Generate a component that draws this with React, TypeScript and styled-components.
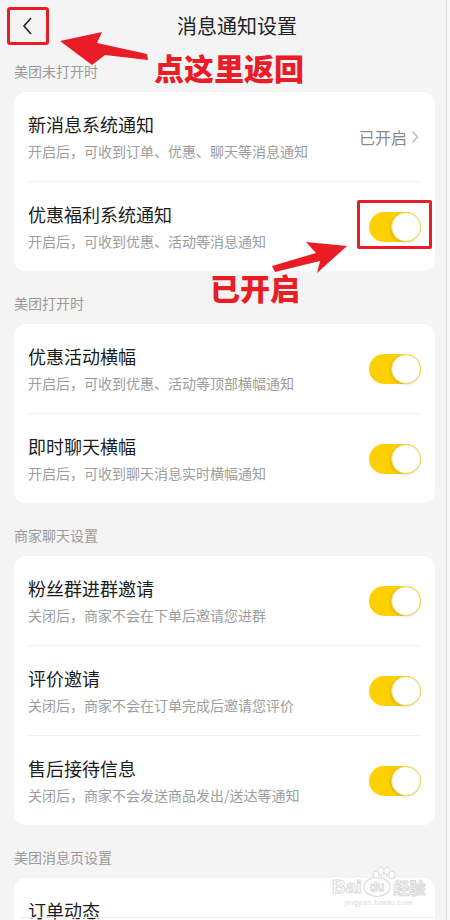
import React from "react";
import styled, { createGlobalStyle } from "styled-components";

const Global = createGlobalStyle`
  html, body { margin: 0; padding: 0; background: #f4f4f4; }
  body { font-family: "Noto Sans CJK SC", "Noto Sans", sans-serif; }
`;

const RED = "#ea1d27";

const Root = styled.div`
  position: relative;
  width: 450px;
  height: 920px;
  overflow: hidden;
  background: #f4f4f4;
  box-shadow: inset -3px 0 0 #f8f8f8, inset -4px 0 0 #e2e2e2;
`;

const Header = styled.div`
  display: flex;
  align-items: flex-start;
  height: 54px;
  box-sizing: border-box;
  padding: 7px 0 0 7px;
`;

const BackBox = styled.div`
  width: 42px;
  height: 38px;
  box-sizing: border-box;
  border: 3px solid ${RED};
  border-radius: 3px;
  display: flex;
  align-items: center;
  justify-content: center;
`;

const Title = styled.div`
  flex: 1;
  padding-right: 25px;
  text-align: center;
  font-size: 20px;
  line-height: 38px;
  color: #222;
`;

const SectionLabel = styled.div<{ $top: number }>`
  padding: ${(p) => p.$top}px 14px 11px;
  font-size: 14px;
  line-height: 20px;
  color: #9a9a9a;
`;

const Card = styled.div`
  margin: 0 15px 0 14px;
  background: #fff;
  border-radius: 12px;
  overflow: hidden;
`;

const Row = styled.div`
  display: flex;
  align-items: center;
  justify-content: space-between;
  height: 89px;
  box-sizing: border-box;
  padding: 0 14px;
`;

const TextBlock = styled.div`
  display: flex;
  flex-direction: column;
  min-height: 49px;
`;

const RowTitle = styled.div`
  font-size: 18px;
  line-height: 24px;
  color: #1c1c1c;
`;

const RowSub = styled.div`
  margin-top: 6px;
  font-size: 14px;
  line-height: 19px;
  color: #9d9d9d;
`;

const Divider = styled.div`
  height: 1px;
  margin: 0 14px;
  background: #f1f1f1;
`;

const StatusLink = styled.div`
  display: flex;
  align-items: center;
  gap: 4px;
  margin-right: 2px;
  font-size: 16px;
  color: #8a8a8a;
`;

const Toggle = styled.div<{ $on: boolean }>`
  position: relative;
  width: 52px;
  height: 30px;
  border-radius: 15px;
  background: ${(p) => (p.$on ? "#ffcf00" : "#e5e5e5")};
  flex-shrink: 0;
`;

const Knob = styled.div<{ $on: boolean }>`
  position: absolute;
  top: 0;
  ${(p) => (p.$on ? "right: 0;" : "left: 0;")}
  width: 30px;
  height: 30px;
  box-sizing: border-box;
  border-radius: 50%;
  background: #fff;
  border: 1px solid #f2d462;
  box-shadow: -1px 1px 2px rgba(0, 0, 0, 0.12);
`;

const Callout = styled.div<{ $left: number; $top: number }>`
  position: absolute;
  left: ${(p) => p.$left}px;
  top: ${(p) => p.$top}px;
  font-size: 30px;
  line-height: 34px;
  font-weight: 900;
  color: ${RED};
  white-space: nowrap;
`;

const HighlightBox = styled.div`
  position: absolute;
  left: 357px;
  top: 200px;
  width: 75px;
  height: 49px;
  box-sizing: border-box;
  border: 3px solid ${RED};
  border-radius: 2px;
`;

const Overlay = styled.svg`
  position: absolute;
  left: 0;
  top: 0;
  pointer-events: none;
`;

const Watermark = styled.div`
  position: absolute;
  left: 332px;
  top: 866px;
  display: flex;
  flex-direction: column;
  align-items: center;
  pointer-events: none;
`;

const WmTop = styled.div`
  display: flex;
  align-items: flex-end;
  font-family: "Liberation Sans", Arial, sans-serif;
  font-size: 19px;
  line-height: 22px;
  font-weight: 700;
  -webkit-text-stroke: 1px #d9d9d9;
  color: #fff;
`;

const WmSmall = styled.div`
  font-family: "Liberation Sans", Arial, sans-serif;
  font-size: 8px;
  line-height: 10px;
  color: #dcdcdc;
  letter-spacing: 0.2px;
`;

const WmCjk = styled.span`
  font-family: "Noto Sans CJK SC", sans-serif;
  font-size: 16px;
  margin-left: 2px;
`;

const BottomEdge = styled.div`
  position: absolute;
  left: 20px;
  right: 16px;
  top: 917px;
  height: 1px;
  background: #ececec;
`;

type Item = { title: string; sub?: string; kind: "toggle" | "link" | "none" };

const sections: { label: string; items: Item[] }[] = [
  {
    label: "美团未打开时",
    items: [
      { title: "新消息系统通知", sub: "开启后，可收到订单、优惠、聊天等消息通知", kind: "link" },
      { title: "优惠福利系统通知", sub: "开启后，可收到优惠、活动等消息通知", kind: "toggle" },
    ],
  },
  {
    label: "美团打开时",
    items: [
      { title: "优惠活动横幅", sub: "开启后，可收到优惠、活动等顶部横幅通知", kind: "toggle" },
      { title: "即时聊天横幅", sub: "开启后，可收到聊天消息实时横幅通知", kind: "toggle" },
    ],
  },
  {
    label: "商家聊天设置",
    items: [
      { title: "粉丝群进群邀请", sub: "关闭后，商家不会在下单后邀请您进群", kind: "toggle" },
      { title: "评价邀请", sub: "关闭后，商家不会在订单完成后邀请您评价", kind: "toggle" },
      { title: "售后接待信息", sub: "关闭后，商家不会发送商品发出/送达等通知", kind: "toggle" },
    ],
  },
  {
    label: "美团消息页设置",
    items: [{ title: "订单动态", kind: "none" }],
  },
];

function Switch({ on }: { on: boolean }) {
  return (
    <Toggle $on={on}>
      <Knob $on={on} />
    </Toggle>
  );
}

function Trailing({ kind }: { kind: Item["kind"] }) {
  if (kind === "toggle") return <Switch on />;
  if (kind === "link")
    return (
      <StatusLink>
        已开启
        <svg width="8" height="14" viewBox="0 0 8 14">
          <path d="M1.5 1.5 L6.5 7 L1.5 12.5" fill="none" stroke="#b5b5b5" strokeWidth="1.3" />
        </svg>
      </StatusLink>
    );
  return null;
}

export default function App() {
  return (
    <Root>
      <Global />
      <Header>
        <BackBox>
          <svg width="14" height="20" viewBox="0 0 14 20">
            <path d="M10 2 L3 10 L10 18" fill="none" stroke="#222" strokeWidth="1.6" />
          </svg>
        </BackBox>
        <Title>消息通知设置</Title>
      </Header>

      {sections.map((s, si) => (
        <React.Fragment key={s.label}>
          <SectionLabel $top={si === 0 ? 7 : 22}>{s.label}</SectionLabel>
          <Card>
            {s.items.map((it, i) => (
              <React.Fragment key={it.title}>
                {i > 0 && <Divider />}
                <Row>
                  <TextBlock>
                    <RowTitle>{it.title}</RowTitle>
                    {it.sub && <RowSub>{it.sub}</RowSub>}
                  </TextBlock>
                  <Trailing kind={it.kind} />
                </Row>
              </React.Fragment>
            ))}
          </Card>
        </React.Fragment>
      ))}

      <BottomEdge />

      <Watermark>
        <svg width="30" height="16" viewBox="0 0 30 16" style={{ marginBottom: -6, marginLeft: 8 }}>
          <g fill="#fff" stroke="#d9d9d9" strokeWidth="1">
            <ellipse cx="8" cy="9" rx="3" ry="4" />
            <ellipse cx="13" cy="5" rx="3" ry="4" />
            <ellipse cx="19" cy="5" rx="3" ry="4" />
            <ellipse cx="24" cy="9" rx="3" ry="4" />
          </g>
        </svg>
        <WmTop>
          Bai
          <svg width="30" height="22" viewBox="0 0 30 22">
            <ellipse cx="15" cy="11" rx="13" ry="9.5" fill="#fff" stroke="#d9d9d9" strokeWidth="1.2" />
            <text x="15" y="15" textAnchor="middle" fontFamily="Liberation Sans, Arial, sans-serif" fontSize="12" fontWeight="700" fill="#fff" stroke="#d4d4d4" strokeWidth="0.8">du</text>
          </svg>
          <WmCjk>经验</WmCjk>
        </WmTop>
        <WmSmall>jingyan.baidu.com</WmSmall>
      </Watermark>

      <Overlay width="450" height="920" viewBox="0 0 450 920">
        <polygon points="60,41 102,32 97,43 147,54 148,60 105,55 92,65" fill={RED} />
        <polygon points="347,246 306,242 316,253 272,266 275,272 320,261 317,273" fill={RED} />
      </Overlay>
      <Callout $left={154} $top={50}>点这里返回</Callout>
      <HighlightBox />
      <Callout $left={210} $top={270}>已开启</Callout>
    </Root>
  );
}
